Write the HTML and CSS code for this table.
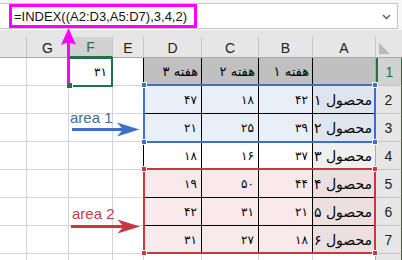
FILE: index.html
```html
<!DOCTYPE html>
<html lang="fa">
<head>
<meta charset="utf-8">
<link rel="stylesheet" href="styles.css">
</head>
<body>
<div class="app">
  <div class="fbar">
    <div class="fbox">
      <div class="formula">=INDEX((A2:D3,A5:D7),3,4,2)</div>
      <svg class="chev" width="9" height="6" viewBox="0 0 9 6"><path d="M1 1 L4.5 4.5 L8 1" fill="none" stroke="#6a6a6a" stroke-width="1.6"/></svg>
    </div>
  </div>
  <div class="sheet">
    <div class="grid">
      <div class="ch"></div><div class="ch">G</div><div class="ch sel">F</div><div class="ch">E</div><div class="ch">D</div><div class="ch">C</div><div class="ch">B</div><div class="ch">A</div><div class="ch corner"><span class="tri"></span></div>

      <div class="c"></div><div class="c"></div><div class="c f1">۳۱</div><div class="c edge"></div><div class="d hd">هفته ۳</div><div class="d hd">هفته ۲</div><div class="d hd">هفته ۱</div><div class="d hd a"></div><div class="rh rsel">1</div>

      <div class="c"></div><div class="c"></div><div class="c"></div><div class="c edge"></div><div class="d bl">۴۷</div><div class="d bl">۱۸</div><div class="d bl">۴۲</div><div class="d bl a">محصول ۱</div><div class="rh">2</div>

      <div class="c"></div><div class="c"></div><div class="c"></div><div class="c edge"></div><div class="d bl">۲۱</div><div class="d bl">۲۵</div><div class="d bl">۳۹</div><div class="d bl a">محصول ۲</div><div class="rh">3</div>

      <div class="c"></div><div class="c"></div><div class="c"></div><div class="c edge"></div><div class="d">۱۸</div><div class="d">۱۶</div><div class="d">۳۷</div><div class="d a">محصول ۳</div><div class="rh">4</div>

      <div class="c"></div><div class="c"></div><div class="c"></div><div class="c edge"></div><div class="d rd">۱۹</div><div class="d rd">۵۰</div><div class="d rd">۴۴</div><div class="d rd a">محصول ۴</div><div class="rh">5</div>

      <div class="c"></div><div class="c"></div><div class="c"></div><div class="c edge"></div><div class="d rd">۴۲</div><div class="d rd">۳۱</div><div class="d rd">۲۱</div><div class="d rd a">محصول ۵</div><div class="rh">6</div>

      <div class="c"></div><div class="c"></div><div class="c"></div><div class="c edge"></div><div class="d rd">۳۱</div><div class="d rd">۲۷</div><div class="d rd">۱۸</div><div class="d rd a">محصول ۶</div><div class="rh">7</div>

      <div class="c"></div><div class="c"></div><div class="c"></div><div class="c"></div><div class="c"></div><div class="c"></div><div class="c"></div><div class="c arow"></div><div class="rh"></div>
    </div>
  </div>

  <div class="ref blue"><i class="h tl"></i><i class="h tr"></i><i class="h bl2"></i><i class="h br"></i></div>
  <div class="ref red"><i class="h tl"></i><i class="h tr"></i><i class="h bl2"></i><i class="h br"></i></div>
  <div class="cursel"><i class="fh"></i></div>

  <svg class="arrows" width="402" height="260" viewBox="0 0 402 260">
    <line x1="68.5" y1="42" x2="68.5" y2="84" stroke="#ff00ff" stroke-width="3"/>
    <polygon points="68.5,28 76,45 68.5,42 61,45" fill="#ff00ff"/>
    <line x1="72" y1="129.5" x2="126" y2="129.5" stroke="#3f6fc6" stroke-width="3"/>
    <polygon points="139.5,129.5 117,122.5 123,129.5 117,136.5" fill="#3f6fc6"/>
    <line x1="71" y1="226.5" x2="126" y2="226.5" stroke="#c8383f" stroke-width="3"/>
    <polygon points="140,226.5 117.5,219.5 123.5,226.5 117.5,233.5" fill="#c8383f"/>
  </svg>
  <span class="lbl l1">area 1</span>
  <span class="lbl l2">area 2</span>
</div>
</body>
</html>
```

FILE: styles.css
```css
* { box-sizing: border-box; margin: 0; padding: 0; }
html, body { width: 402px; height: 260px; overflow: hidden; }
body { background: #e6e6e6; font-family: "Liberation Sans", Arial, sans-serif; color: #222; }
.app { position: relative; width: 402px; height: 260px; overflow: hidden; }

.fbar { height: 30px; background: #f6f6f6; padding: 3px 4px 1px 0; display: flex; }
.fbox { flex: 1; background: #fff; border: 1px solid #c6c6c6; border-left: none; display: flex; align-items: center; justify-content: space-between; padding: 0 6px 0 9px; }
.formula { width: 188px; height: 24px; border: 3px solid #ff00ff; font-size: 13px; color: #111; display: flex; align-items: center; padding-left: 2px; white-space: nowrap; }
.chev { display: block; margin-top: 1px; }

.sheet { padding-top: 7px; background: #e6e6e6; }
.grid { display: grid; grid-template-columns: 27px 42px 44px 31px 58px 57px 54px 63px 26px; grid-template-rows: 21px repeat(7, 28px) 28px; }

.ch { background: #e6e6e6; border-right: 1px solid #c4c4c4; border-bottom: 1px solid #a9a9a9; font-size: 14px; color: #222; display: flex; align-items: center; justify-content: center; padding-top: 1px; }
.ch.sel { background: #d2d2d2; color: #217346; border-bottom: 2px solid #217346; }
.ch.corner { border-right: none; position: relative; }
.tri { position: absolute; left: 3px; top: 6px; width: 0; height: 0; border-style: solid; border-width: 11px 0 0 11px; border-color: transparent transparent transparent #b9b9b9; }

.c { background: #fff; border-right: 1px solid #d4d4d4; border-bottom: 1px solid #d4d4d4; font-family: "DejaVu Sans", sans-serif; font-size: 12px; display: flex; align-items: center; justify-content: flex-end; padding-right: 5px; color: #000; }
.c.edge { border-right-color: #000; }
.c.arow { border-right-color: #a9a9a9; }

.d { background: #fff; border-right: 1px solid #000; border-bottom: 1px solid #000; font-family: "DejaVu Sans", sans-serif; font-size: 12px; color: #000; display: flex; align-items: center; justify-content: flex-end; padding-right: 4px; white-space: nowrap; }
.d.a { border-right-color: #a9a9a9; background: #f0f0f0; font-size: 14px; padding-right: 3px; }
.d.hd { background: #c0c0c0; font-size: 13px; padding-right: 3px; }
.d.bl { background: #e9eff9; }
.d.bl.a { background: #dfe5ee; }
.d.rd { background: #f9e9ea; }
.d.rd.a { background: #eddfe0; }

.rh { background: #e6e6e6; border-bottom: 1px solid #c4c4c4; border-right: 1px solid #217346; font-size: 14px; color: #222; display: flex; align-items: center; justify-content: center; }
.rh.rsel { background: #d2d2d2; color: #217346; border-left: 2px solid #217346; }

.ref { position: absolute; left: 143px; width: 233px; border: 2px solid; }
.ref.blue { top: 84px; height: 59px; border-color: #3f6fc6; }
.ref.red { top: 168px; height: 86px; border-color: #c8383f; }
.h { position: absolute; width: 6px; height: 6px; border: 1px solid #fff; }
.blue .h { background: #3f6fc6; }
.red .h { background: #c8383f; }
.h.tl { left: -4px; top: -4px; }
.h.tr { right: -4px; top: -4px; }
.h.bl2 { left: -4px; bottom: -4px; }
.h.br { right: -4px; bottom: -4px; }

.cursel { position: absolute; left: 68px; top: 57px; width: 45px; height: 30px; border: 2px solid #217346; }
.fh { position: absolute; left: -4px; bottom: -4px; width: 7px; height: 7px; background: #217346; border: 1px solid #fff; }

.arrows { position: absolute; left: 0; top: 0; }
.lbl { position: absolute; font-size: 15px; line-height: 15px; white-space: nowrap; }
.l1 { left: 70px; top: 110px; color: #3c6d99; }
.l2 { left: 72px; top: 206px; color: #c2404a; }
```
